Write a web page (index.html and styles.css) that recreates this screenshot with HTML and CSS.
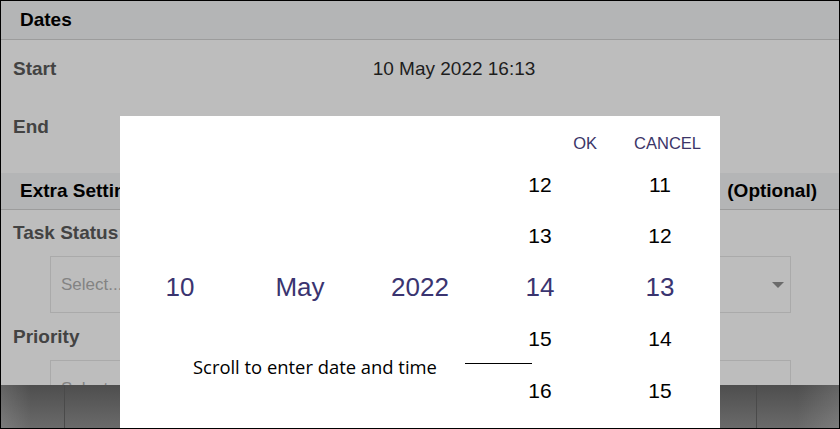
FILE: index.html
```html
<!DOCTYPE html>
<html>
<head>
<meta charset="utf-8">
<link rel="stylesheet" href="styles.css">
</head>
<body>
<div class="screen">
  <div class="content">
    <section class="group dates">
      <div class="group-head"><span>Dates</span></div>
      <div class="row"><span class="label">Start</span><span class="value">10 May 2022 16:13</span></div>
      <div class="row"><span class="label">End</span><span class="value"></span></div>
    </section>
    <section class="group">
      <div class="group-head"><span>Extra Settings</span><span>(Optional)</span></div>
      <div class="field">
        <div class="field-label">Task Status</div>
        <div class="select"><span class="placeholder">Select...</span><span class="caret"></span></div>
      </div>
      <div class="field">
        <div class="field-label">Priority</div>
        <div class="select"><span class="placeholder">Select...</span><span class="caret"></span></div>
      </div>
    </section>
  </div>
  <footer class="bar">
    <div class="bar-cell first"></div>
    <div class="bar-cell mid"></div>
    <div class="bar-cell last"></div>
  </footer>

  <div class="picker">
    <div class="actions">
      <span class="btn">OK</span>
      <span class="btn">CANCEL</span>
    </div>
    <div class="wheels">
      <div class="wheel">
        <span></span><span></span><span class="sel">10</span><span></span><span></span>
      </div>
      <div class="wheel">
        <span></span><span></span><span class="sel">May</span><span></span><span></span>
      </div>
      <div class="wheel">
        <span></span><span></span><span class="sel">2022</span><span></span><span></span>
      </div>
      <div class="wheel">
        <span>12</span><span>13</span><span class="sel">14</span><span>15</span><span>16</span>
      </div>
      <div class="wheel">
        <span>11</span><span>12</span><span class="sel">13</span><span>14</span><span>15</span>
      </div>
    </div>
    <div class="hint">Scroll to enter date and time</div>
    <div class="hint-line"></div>
  </div>
</div>
</body>
</html>
```

FILE: styles.css
```css
* { box-sizing: border-box; }
html, body { margin: 0; padding: 0; background: #ffffff; }
body { font-family: "Liberation Sans", Arial, sans-serif; }

.screen {
  position: relative;
  width: 840px;
  height: 429px;
  border: 1px solid #000000;
  overflow: hidden;
  display: flex;
  flex-direction: column;
  background: #bdbdbd;
}

.content {
  height: 384px;
  overflow: hidden;
  flex: none;
}

.group-head {
  display: flex;
  justify-content: space-between;
  align-items: center;
  background: #b4b5b6;
  border-bottom: 1px solid #9c9c9c;
  padding: 0 22px 0 19px;
  font-size: 19px;
  font-weight: bold;
  color: #000000;
  height: 37px;
}
.dates .group-head { height: 39px; }
.dates { margin-bottom: 17px; }

.row {
  display: flex;
  align-items: center;
  height: 58px;
  padding-left: 12px;
}
.label {
  width: 120px;
  font-size: 19px;
  font-weight: bold;
  color: #434343;
}
.value {
  flex: 1;
  text-align: center;
  font-size: 19px;
  color: #1d1d1d;
  padding-right: 64px;
}

.field-label {
  height: 46px;
  display: flex;
  align-items: center;
  padding-left: 12px;
  font-size: 19px;
  font-weight: bold;
  color: #434343;
}
.field + .field .field-label { height: 47px; }

.select {
  margin: 0 48px 0 49px;
  height: 57px;
  border: 1px solid #aaaaaa;
  display: flex;
  align-items: center;
  justify-content: space-between;
  padding: 0 6px 0 10px;
}
.placeholder {
  font-size: 17px;
  color: #838383;
}
.caret {
  width: 0;
  height: 0;
  border-left: 6px solid transparent;
  border-right: 6px solid transparent;
  border-top: 6px solid #6b6b6b;
}

.bar {
  flex: 1;
  display: flex;
  background: linear-gradient(#4e4e4e, #6a6a6a);
}
.bar-cell { height: 100%; }
.bar-cell.first {
  width: 64px;
  border-right: 1px solid #4a4a4a;
  background: linear-gradient(90deg, rgba(255,255,255,0.12), rgba(255,255,255,0) 30px);
}
.bar-cell.mid {
  width: 692px;
  border-right: 1px solid #4a4a4a;
}
.bar-cell.last {
  flex: 1;
  background: linear-gradient(90deg, rgba(255,255,255,0) 40px, rgba(255,255,255,0.12));
}

.picker {
  position: absolute;
  left: 119px;
  top: 115px;
  width: 600px;
  height: 330px;
  background: #ffffff;
}
.actions {
  height: 43px;
  display: flex;
  justify-content: flex-end;
  align-items: flex-start;
  gap: 37px;
  padding: 18px 19px 0 0;
  font-size: 16.5px;
  line-height: 19px;
  color: #3b3568;
}
.wheels {
  display: grid;
  grid-template-columns: repeat(5, 120px);
}
.wheel {
  display: grid;
  grid-template-rows: repeat(5, 51.5px);
}
.wheel span {
  display: flex;
  align-items: center;
  justify-content: center;
  font-size: 21px;
  color: #000000;
}
.wheel span.sel {
  font-size: 26px;
  color: #3a3470;
}
.hint {
  position: absolute;
  left: 73px;
  top: 238px;
  font-family: "Open Sans", "Noto Sans", sans-serif;
  font-size: 18.4px;
  line-height: 25px;
  color: #000000;
}
.hint-line {
  position: absolute;
  left: 345px;
  top: 247px;
  width: 67px;
  height: 1px;
  background: #000000;
}
```
